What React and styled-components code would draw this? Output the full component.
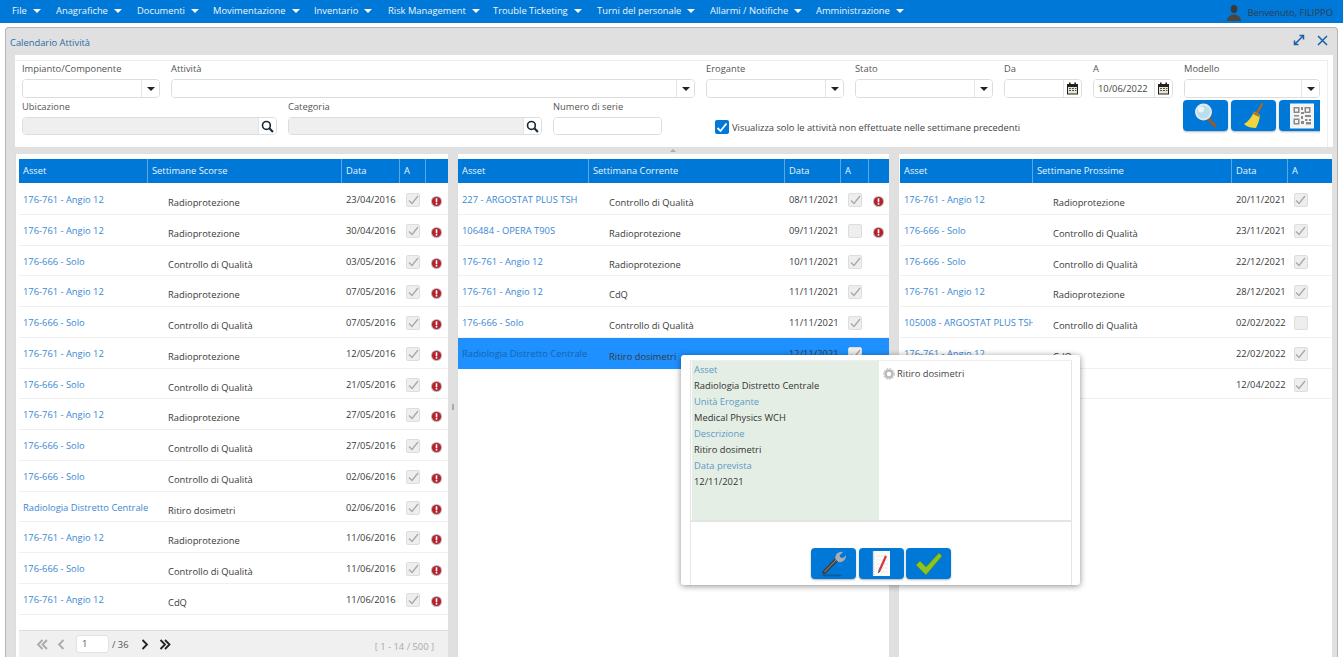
import React from 'react';
import styled, { createGlobalStyle } from 'styled-components';

const Global = createGlobalStyle`
  html, body { margin: 0; padding: 0; background: #fff; }
  * { box-sizing: border-box; }
  body { font-family: "Open Sans", "Liberation Sans", sans-serif; font-size: 9.35px; color: #333; }
`;
const Root = styled.div`position: relative; width: 1343px; height: 657px; overflow: hidden; background: #fff;`;
const Nav = styled.div`display: flex; align-items: center; height: 23px; background: #0078d7; padding: 0 10px 2px 12px; color: #fff;`;
const NavItem = styled.div`display: flex; align-items: center; gap: 6px; width: ${p => p.$w}px; flex: none; color: #eef6fd; white-space: nowrap;`;
const Tri = styled.span`display: inline-block; width: 0; height: 0; flex: none; border-left: 4px solid transparent; border-right: 4px solid transparent; border-top: 4px solid ${p => p.$c || '#fff'};`;
const Welcome = styled.div`margin-left: auto; display: flex; align-items: center; gap: 5px; color: #2c3e50; padding-top: 4px; white-space: nowrap;`;
const Win = styled.div`margin: 4px 5px 0 5px; height: 633px; background: #e0e0e0; border: 1px solid #b5b5b5; border-bottom: 0; border-radius: 4px 4px 0 0; display: flex; flex-direction: column;`;
const WinHead = styled.div`height: 27px; flex: none; display: flex; align-items: center; padding: 0 9px 3px 4px; color: #2a6da8; gap: 12px;`;
const WinTitle = styled.div`flex: 1; padding-top: 5px;`;
const Body = styled.div`margin: 0 4px 0 9px; flex: 1; display: flex; flex-direction: column; min-height: 0;`;
const FilterWrap = styled.div`background: #fff; padding: 5px 5px 0 0; height: 92px; flex: none;`;
const FilterBox = styled.div`height: 87px; border-top: 1px solid #eee; border-right: 1px solid #eee; padding: 1px 0 0 7px;`;
const FRow = styled.div`display: flex; gap: 11px; height: ${p => p.$h}px; align-items: flex-start;`;
const Field = styled.div`width: ${p => p.$w}px; flex: none;`;
const Label = styled.div`height: 14px; line-height: 14px; color: #555; margin-bottom: 3px;`;
const Input = styled.div`display: flex; height: ${p => p.$h || 19}px; border: 1px solid #ddd; border-radius: 4px; background: #fff; overflow: hidden;`;
const InputBody = styled.div`flex: 1; background: ${p => p.$off ? '#efefef' : '#fff'}; padding-left: 4px; line-height: 17px; color: #444;`;
const Addon = styled.div`width: ${p => p.$w || 18}px; flex: none; border-left: 1px solid #e4e4e4; display: flex; align-items: center; justify-content: center; background: #fff;`;
const CheckWrap = styled.div`display: flex; align-items: center; gap: 3px; margin-left: 42px; margin-top: 20px; width: 457px; flex: none; color: #444; white-space: nowrap;`;
const BlueCheck = styled.div`width: 14px; height: 14px; border-radius: 2px; background: #0078d7; display: flex; align-items: center; justify-content: center;`;
const BtnGroup = styled.div`display: flex; gap: 3px; width: 137px; flex: none; overflow: hidden; height: 34px;`;
const IconBtn = styled.div`width: 45px; height: 31px; flex: none; border-radius: 4px; background: #0078d7; display: flex; align-items: center; justify-content: center; box-shadow: 0 1px 2px rgba(0,0,0,.3);`;
const Splitter = styled.div`height: 7px; flex: none; display: flex; align-items: center; justify-content: center; padding-right: 2px;`;
const MiniTri = styled.span`width: 0; height: 0; border-left: 3px solid transparent; border-right: 3px solid transparent; border-bottom: 3px solid #aaa;`;
const Panels = styled.div`flex: 1; display: flex; min-height: 0; gap: 9px;`;
const Panel = styled.div`width: ${p => p.$w}px; flex: none; background: #fff; padding: 5px 0 0 ${p => p.$pl}px; display: flex; flex-direction: column; border-left: 1px solid #ddd; position: relative;`;
const Grip = styled.span`position: absolute; right: -6px; top: 250px; width: 2px; height: 6px; background: #aaa;`;
const Grid = styled.div`display: grid; grid-template-columns: ${p => p.$cols};`;
const THead = styled(Grid)`height: 24px; background: #0078d7; flex: none;`;
const Th = styled.div`color: #eaf4fc; line-height: 24px; padding-left: 4px; border-right: 1px solid #5aa7e6; &:last-child { border-right: 0; }`;
const TRows = styled.div`flex: 1; min-height: 0; overflow: hidden; padding-top: 1px;`;
const Tr = styled(Grid)`height: 30.77px; border-bottom: ${p => p.$sel ? '0' : '1px solid #f0f0f0'}; background: ${p => p.$sel ? '#1e90ff' : '#fff'};`;
const Td = styled.div`padding: 9px 0 0 4px; line-height: 14px; white-space: nowrap; overflow: hidden; color: #3a3a3a;`;
const AssetLink = styled(Td)`color: ${p => p.$sel ? '#1565b0' : '#3a87d4'};`;
const ActTd = styled(Td)`padding: 12px 0 0 ${p => p.$pl || 20}px;`;
const DateTd = styled(Td)``;
const CheckCell = styled.div`display: flex; justify-content: center; padding-top: 9px;`;
const Box = styled.div`width: 14px; height: 14px; border: 1px solid #ddd; border-radius: 2px; background: #eee; display: flex; align-items: center; justify-content: center;`;
const ErrCell = styled.div`display: flex; justify-content: center; padding: 12px 1px 0 0;`;
const Footer = styled.div`height: 30px; flex: none; background: #f0f0f0; border-top: 1px solid #ddd; display: flex; align-items: center; padding: 0 14px 3px 17px; color: #555;`;
const PageInput = styled.div`width: 33px; height: 18px; background: #fff; border: 1px solid #e2e2e2; border-radius: 3px; padding-left: 5px; line-height: 16px; margin: 0 3px 0 11px;`;
const PagerIcon = styled.span`display: inline-flex; margin-left: ${p => p.$ml || 0}px;`;
const PageInfo = styled.div`margin-left: auto; color: #aaa; padding-top: 4px;`;
const Popup = styled.div`position: absolute; left: 681px; top: 355px; width: 399px; height: 230px; background: #fff; border-radius: 3px; box-shadow: 0 1px 6px rgba(0,0,0,.45); padding: 5px 8px 0 9px;`;
const PopFrame = styled.div`height: 225px; border-left: 1px solid #e6e6e6; border-right: 1px solid #e6e6e6; border-top: 1px solid #eee; display: flex; flex-direction: column;`;
const PopTop = styled.div`display: flex; height: 159px; flex: none; padding-left: 1px; border-bottom: 2px solid #e4e4e4; box-sizing: content-box;`;
const Green = styled.div`width: 187px; flex: none; background: #e4eee4; padding: 1px 0 0 2px;`;
const GLabel = styled.div`color: #5e9ac6; line-height: 16px;`;
const GValue = styled.div`color: #333; line-height: 16px; height: 16px;`;
const PopRight = styled.div`padding: 3px 0 0 4px; display: flex; align-items: center; gap: 2px; height: 22px; color: #444;`;
const PopBtns = styled.div`display: flex; gap: 2.5px; justify-content: center; padding-top: 26px;`;

const Caret = () => <Tri $c="#222" />;
const Search = () => (
  <svg width="13" height="13" viewBox="0 0 12 12"><circle cx="5" cy="5" r="3.6" fill="none" stroke="#1b2a36" strokeWidth="1.5"/><path d="M7.7 7.7 11 11" stroke="#1b2a36" strokeWidth="2"/></svg>
);
const Cal = () => (
  <svg width="13" height="13" viewBox="0 0 13 13"><rect x="1" y="2" width="11" height="10.5" fill="#222"/><rect x="3" y="0.5" width="1.6" height="3" fill="#222"/><rect x="8.4" y="0.5" width="1.6" height="3" fill="#222"/><rect x="2" y="5" width="9" height="6.5" fill="#e9e4d2"/><path d="M3 6.5h2M6 6.5h2M9 6.5h1.5M3 8.5h2M6 8.5h2M9 8.5h1.5" stroke="#555" strokeWidth="1"/></svg>
);
const GreyCheck = () => (
  <svg width="11" height="10" viewBox="0 0 11 10"><path d="M1 5.5 4 8.5 10 1" fill="none" stroke="#a8a8a8" strokeWidth="1.3"/></svg>
);
const Err = () => (
  <svg width="11" height="11" viewBox="0 0 11 11"><circle cx="5.500" cy="5.500" r="5.500" fill="#b9b9b9"/><circle cx="5.500" cy="5.500" r="4.600" fill="#b5202a"/><rect x="4.700" y="2.300" width="1.600" height="4" fill="#fff"/><rect x="4.700" y="7" width="1.600" height="1.600" fill="#fff"/></svg>
);
const User = () => (
  <svg width="16" height="17" viewBox="0 0 16 17"><ellipse cx="8" cy="5" rx="3.300" ry="4" fill="#3a3a3a"/><path d="M1 17c0-3.500 2-5 5.500-6.500h3C13 12 15 13.500 15 17z" fill="#4a4640"/></svg>
);
const Expand = () => (
  <svg width="12" height="12" viewBox="0 0 12 12"><path d="M2 10 10 2M6.500 1.500H10.500V5.500M1.500 6.500V10.500H5.500" fill="none" stroke="#1a5fa8" strokeWidth="1.500"/></svg>
);
const Close = () => (
  <svg width="11" height="11" viewBox="0 0 11 11"><path d="M1 1 10 10M10 1 1 10" stroke="#1a5fa8" strokeWidth="1.500"/></svg>
);
const Magnifier = () => (
  <svg width="24" height="26" viewBox="0 0 24 26"><path d="M14 15 21 23" stroke="#9a5a22" strokeWidth="3" strokeLinecap="round"/><circle cx="9.500" cy="9" r="7.500" fill="#b9dfee" stroke="#dfe8ee" strokeWidth="2"/><circle cx="7" cy="6.500" r="3" fill="#e8f6fb"/></svg>
);
const Broom = () => (
  <svg width="22" height="26" viewBox="0 0 22 26"><path d="M14 10 19 1" stroke="#a06a28" strokeWidth="2.500" strokeLinecap="round"/><path d="M11 8.500 17 12C16.500 17 15 21 13 25 9 25 4 24 1 21 5 19 9 14 11 8.500z" fill="#f1d53c"/><path d="M11 8.500 17 12 16 14 10 11z" fill="#a9772c"/></svg>
);
const QR = () => (
  <svg width="24" height="26" viewBox="0 0 24 26"><rect width="24" height="25" y="0.500" fill="#f4f4f4"/><g fill="#8a8a8a"><rect x="3.500" y="4" width="6" height="6"/><rect x="14.500" y="4" width="6" height="6"/><rect x="3.500" y="15.500" width="6" height="6"/><rect x="11" y="4" width="2" height="3"/><rect x="11" y="9" width="3" height="2"/><rect x="4" y="12" width="5" height="1.500"/><rect x="15" y="12" width="6" height="2"/><rect x="11" y="13" width="2" height="3"/><rect x="15" y="16" width="2.500" height="2"/><rect x="19" y="16" width="2" height="2"/><rect x="11" y="18" width="3" height="3"/><rect x="16" y="19" width="5" height="2.500"/></g><g fill="#f4f4f4"><rect x="5" y="5.500" width="3" height="3"/><rect x="16" y="5.500" width="3" height="3"/><rect x="5" y="17" width="3" height="3"/></g></svg>
);
const Wrench = () => (
  <svg width="26" height="27" viewBox="0 0 26 27"><ellipse cx="11" cy="25.500" rx="10" ry="1" fill="#0a5a9f"/><path d="M3 22.500 16 9" stroke="#3d4248" strokeWidth="4" strokeLinecap="round"/><path d="M3.500 22 15 10" stroke="#8b9096" strokeWidth="1"/><path d="M14.500 9.500C13.500 5 17 1 22 2L18.500 5.500 20 8 23 7.500 25 5C25.500 9 22 13 17.500 12z" fill="#a8adb2"/></svg>
);
const Notepad = () => (
  <svg width="19" height="27" viewBox="0 0 19 27"><rect x="1" y="1" width="17" height="25" fill="#fbfbfb"/><path d="M1.500 1v25" stroke="#bcd" strokeWidth="1.500" strokeDasharray="1.500 1"/><path d="M4 6h12M4 10h12M4 14h12M4 18h12M4 22h12" stroke="#e4e9ee" strokeWidth=".8"/><path d="M14 6 7.500 20.500" stroke="#d9343a" strokeWidth="2.200"/><path d="M6.700 20 6 23.500 8.500 21z" fill="#333"/></svg>
);
const BigCheck = () => (
  <svg width="28" height="24" viewBox="0 0 28 24"><path d="M1 13 5 9 11 15 24 1 27 4 11 23z" fill="#8cc521" stroke="#5f8e16" strokeWidth=".8"/></svg>
);
const Gear = () => (
  <svg width="12" height="12" viewBox="0 0 12 12"><circle cx="6" cy="6" r="3.500" fill="none" stroke="#bbb" strokeWidth="2.600"/><circle cx="6" cy="6" r="5.300" fill="none" stroke="#ccc" strokeWidth="1.300" strokeDasharray="1.800 1.300"/></svg>
);
const Chev = ({ d, c, dbl }) => (
  <svg width={dbl ? 12 : 8} height="11" viewBox={dbl ? '0 0 12 11' : '0 0 8 11'}>
    <path d={d === 'l' ? 'M6.500 1 2 5.500 6.500 10' : 'M1.500 1 6 5.500 1.500 10'} fill="none" stroke={c} strokeWidth="1.800"/>
    {dbl && <path d={d === 'l' ? 'M11 1 6.500 5.500 11 10' : 'M6 1 10.500 5.500 6 10'} fill="none" stroke={c} strokeWidth="1.800"/>}
  </svg>
);

const NAV = [['File', 44], ['Anagrafiche', 81], ['Documenti', 76], ['Movimentazione', 101], ['Inventario', 74], ['Risk Management', 105], ['Trouble Ticketing', 104], ['Turni del personale', 113], ['Allarmi / Notifiche', 106], ['Amministrazione', 100]];
const A = '176-761 - Angio 12', S = '176-666 - Solo', R = 'Radioprotezione', C = 'Controllo di Qualità', D = 'Ritiro dosimetri', Q = 'CdQ', Z = 'Radiologia Distretto Centrale';
const LEFT = [[A,R,'23/04/2016'],[A,R,'30/04/2016'],[S,C,'03/05/2016'],[A,R,'07/05/2016'],[S,C,'07/05/2016'],[A,R,'12/05/2016'],[S,C,'21/05/2016'],[A,R,'27/05/2016'],[S,C,'27/05/2016'],[S,C,'02/06/2016'],[Z,D,'02/06/2016'],[A,R,'11/06/2016'],[S,C,'11/06/2016'],[A,Q,'11/06/2016']].map(r => [...r, true, true]);
const MID = [['227 - ARGOSTAT PLUS TSH',C,'08/11/2021',true,true],['106484 - OPERA T90S',R,'09/11/2021',false,true],[A,R,'10/11/2021',true,false],[A,Q,'11/11/2021',true,false],[S,C,'11/11/2021',true,false],[Z,D,'12/11/2021',true,false]];
const RIGHT = [[A,R,'20/11/2021',true],[S,C,'23/11/2021',true],[S,C,'22/12/2021',true],[A,R,'28/12/2021',true],['105008 - ARGOSTAT PLUS TSH',C,'02/02/2022',false],[A,Q,'22/02/2022',true],[S,Q,'12/04/2022',true]];

const Table = ({ cols, title, rows, sel, noErr }) => (
  <>
    <THead $cols={cols}>
      <Th>Asset</Th><Th>{title}</Th><Th>Data</Th><Th>A</Th>{!noErr && <Th />}
    </THead>
    <TRows>
      {rows.map((r, i) => (
        <Tr key={i} $cols={cols} $sel={i === sel}>
          <AssetLink $sel={i === sel}>{r[0]}</AssetLink>
          <ActTd>{r[1]}</ActTd>
          <DateTd>{r[2]}</DateTd>
          <CheckCell><Box>{r[3] && <GreyCheck />}</Box></CheckCell>
          {!noErr && <ErrCell>{r[4] && <Err />}</ErrCell>}
        </Tr>
      ))}
    </TRows>
  </>
);

export default function App() {
  return (
    <Root>
      <Global />
      <Nav>
        {NAV.map(([t, w]) => <NavItem key={t} $w={w}>{t}<Tri /></NavItem>)}
        <Welcome><User />Benvenuto, FILIPPO</Welcome>
      </Nav>
      <Win>
        <WinHead><WinTitle>Calendario Attività</WinTitle><Expand /><Close /></WinHead>
        <Body>
          <FilterWrap>
            <FilterBox>
              <FRow $h={38}>
                <Field $w={138}><Label>Impianto/Componente</Label><Input><InputBody /><Addon><Caret /></Addon></Input></Field>
                <Field $w={524}><Label>Attività</Label><Input><InputBody /><Addon><Caret /></Addon></Input></Field>
                <Field $w={138}><Label>Erogante</Label><Input><InputBody /><Addon><Caret /></Addon></Input></Field>
                <Field $w={138}><Label>Stato</Label><Input><InputBody /><Addon><Caret /></Addon></Input></Field>
                <Field $w={78}><Label>Da</Label><Input><InputBody /><Addon><Cal /></Addon></Input></Field>
                <Field $w={80}><Label>A</Label><Input><InputBody>10/06/2022</InputBody><Addon><Cal /></Addon></Input></Field>
                <Field $w={136}><Label>Modello</Label><Input><InputBody /><Addon><Caret /></Addon></Input></Field>
              </FRow>
              <FRow $h={46}>
                <Field $w={255}><Label>Ubicazione</Label><Input $h={18}><InputBody $off /><Addon><Search /></Addon></Input></Field>
                <Field $w={254}><Label>Categoria</Label><Input $h={18}><InputBody $off /><Addon><Search /></Addon></Input></Field>
                <Field $w={109}><Label>Numero di serie</Label><Input $h={18}><InputBody /></Input></Field>
                <CheckWrap>
                  <BlueCheck><svg width="12" height="11" viewBox="0 0 12 11"><path d="M1.500 6 4.500 9 10.500 1.500" fill="none" stroke="#fff" strokeWidth="1.800"/></svg></BlueCheck>
                  Visualizza solo le attività non effettuate nelle settimane precedenti
                </CheckWrap>
                <BtnGroup>
                  <IconBtn><Magnifier /></IconBtn>
                  <IconBtn><Broom /></IconBtn>
                  <IconBtn><QR /></IconBtn>
                </BtnGroup>
              </FRow>
            </FilterBox>
          </FilterWrap>
          <Splitter><MiniTri /></Splitter>
          <Panels>
            <Panel $w={433} $pl={3}>
              <Table cols="129px 194px 58px 26px 21px" title="Settimane Scorse" rows={LEFT} />
              <Footer>
                <PagerIcon><Chev d="l" c="#aaa" dbl /></PagerIcon>
                <PagerIcon $ml={9}><Chev d="l" c="#aaa" /></PagerIcon>
                <PageInput>1</PageInput>/ 36
                <PagerIcon $ml={12}><Chev d="r" c="#222" /></PagerIcon>
                <PagerIcon $ml={10}><Chev d="r" c="#222" dbl /></PagerIcon>
                <PageInfo>[ 1 - 14 / 500 ]</PageInfo>
              </Footer>
              <Grip />
            </Panel>
            <Panel $w={432} $pl={0}>
              <Table cols="131px 196px 56px 28px 20px" title="Settimana Corrente" rows={MID} sel={5} />
            </Panel>
            <Panel $w={434} $pl={1}>
              <Table cols="133px 199px 56px 25px" title="Settimane Prossime" rows={RIGHT} noErr />
            </Panel>
          </Panels>
        </Body>
      </Win>
      <Popup>
        <PopFrame>
          <PopTop>
            <Green>
              <GLabel>Asset</GLabel>
              <GValue>Radiologia Distretto Centrale</GValue>
              <GLabel>Unità Erogante</GLabel>
              <GValue>Medical Physics WCH</GValue>
              <GLabel>Descrizione</GLabel>
              <GValue>Ritiro dosimetri</GValue>
              <GLabel>Data prevista</GLabel>
              <GValue>12/11/2021</GValue>
            </Green>
            <PopRight><Gear />Ritiro dosimetri</PopRight>
          </PopTop>
          <PopBtns>
            <IconBtn><Wrench /></IconBtn>
            <IconBtn><Notepad /></IconBtn>
            <IconBtn><BigCheck /></IconBtn>
          </PopBtns>
        </PopFrame>
      </Popup>
    </Root>
  );
}
